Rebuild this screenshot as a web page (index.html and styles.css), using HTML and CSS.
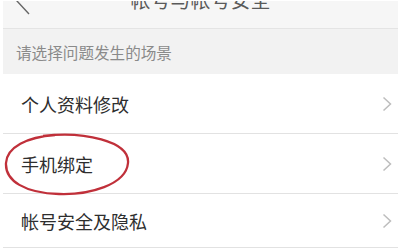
FILE: index.html
```html
<!DOCTYPE html>
<html lang="zh-CN">
<head>
<meta charset="utf-8">
<title>帐号与帐号安全</title>
<link rel="stylesheet" href="styles.css">
</head>
<body>
<div class="frame">
  <header class="topbar">
    <svg class="back" width="16" height="28" viewBox="0 0 16 28"><path d="M14 1 L2 14 L14 27" fill="none" stroke="#666" stroke-width="1.4"/></svg>
    <h1 class="title">帐号与帐号安全</h1>
  </header>
  <div class="section">请选择问题发生的场景</div>
  <ul class="list">
    <li class="row"><span class="label">个人资料修改</span><svg class="arrow" width="10" height="16" viewBox="0 0 10 16"><path d="M1.5 1.5 L8.5 8 L1.5 14.5" fill="none" stroke="#bdbdbd" stroke-width="1.5"/></svg></li>
    <li class="row"><span class="label">手机绑定</span><svg class="arrow" width="10" height="16" viewBox="0 0 10 16"><path d="M1.5 1.5 L8.5 8 L1.5 14.5" fill="none" stroke="#bdbdbd" stroke-width="1.5"/></svg>
      <svg class="circle" width="130" height="64" viewBox="0 0 130 64"><path d="M40 3 C80 -2 127 8 125 30 C123 52 86 62 56 61 C22 60 2 48 3 30 C4 14 24 4 52 2" fill="none" stroke="#c0303a" stroke-width="2.3"/></svg>
    </li>
    <li class="row row-last"><span class="label">帐号安全及隐私</span><svg class="arrow" width="10" height="16" viewBox="0 0 10 16"><path d="M1.5 1.5 L8.5 8 L1.5 14.5" fill="none" stroke="#bdbdbd" stroke-width="1.5"/></svg></li>
  </ul>
</div>
</body>
</html>
```

FILE: styles.css
```css
html, body {
  margin: 0;
  padding: 0;
  background: #ffffff;
}
body {
  font-family: "Noto Sans CJK SC", "Noto Sans", sans-serif;
}
.frame {
  margin: 1px 2px 0 3px;
  height: 247px;
  overflow: hidden;
  background: #ffffff;
}
.topbar {
  margin-top: -29px;
  height: 56px;
  background: #f6f6f6;
  border-bottom: 1px solid #e4e4e4;
  display: flex;
  align-items: center;
  justify-content: center;
  position: relative;
}
.back {
  position: absolute;
  left: 12px;
  top: 15px;
}
.title {
  margin: 0;
  font-size: 20px;
  font-weight: 400;
  color: #5a5a5a;
  line-height: 1;
}
.section {
  height: 45px;
  display: flex;
  align-items: center;
  padding-left: 13px;
  background: #f2f2f2;
  color: #8a8a8a;
  font-size: 15.6px;
}
.list {
  list-style: none;
  margin: 0;
  padding: 0;
}
.row {
  position: relative;
  height: 59px;
  border-bottom: 1px solid #e2e2e2;
  display: flex;
  align-items: center;
  justify-content: space-between;
  padding: 0 6px 0 18px;
}
.row-last {
  height: 53px;
}
.label {
  font-size: 18px;
  color: #2e2e2e;
}
.circle {
  position: absolute;
  left: 0;
  top: -1px;
}
```
